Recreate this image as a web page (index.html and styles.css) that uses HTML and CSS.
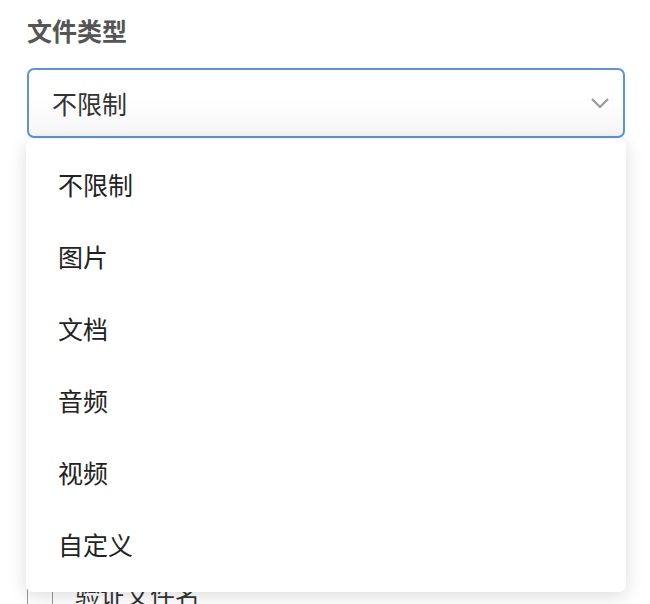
FILE: index.html
```html
<!DOCTYPE html>
<html lang="zh-CN">
<head>
    <meta charset="UTF-8">
    <meta name="viewport" content="width=device-width, initial-scale=1.0">
    <title>文件类型</title>
    <link rel="stylesheet" href="styles.css">
</head>
<body>
    <div class="form">
        <div class="field">
            <label class="field-label">文件类型</label>
            <div class="select-wrap">
                <div class="select open">
                    <span class="select-value">不限制</span>
                    <svg class="select-arrow" width="18" height="10" viewBox="0 0 18 10">
                        <path d="M1 1 L9 9 L17 1" fill="none" stroke="#999" stroke-width="2.2"/>
                    </svg>
                </div>
                <ul class="select-menu">
                    <li>不限制</li>
                    <li>图片</li>
                    <li>文档</li>
                    <li>音频</li>
                    <li>视频</li>
                    <li>自定义</li>
                </ul>
            </div>
        </div>

        <div class="check-row">
            <span class="checkbox"></span>
            <span class="check-text">验证文件名</span>
        </div>
    </div>
</body>
</html>
```

FILE: styles.css
```css
body {
    margin: 0;
    padding: 15px 25px 0 27px;
    background-color: #fff;
    font-family: "Noto Sans CJK SC", "Noto Sans", sans-serif;
    color: #333;
}
.field-label {
    display: block;
    font-size: 25px;
    font-weight: bold;
    line-height: 31px;
    color: #555;
    margin-bottom: 22px;
}
.select-wrap {
    position: relative;
}
.select {
    height: 66px;
    display: flex;
    align-items: center;
    justify-content: space-between;
    padding: 0 14px 0 23px;
    border: 2px solid #5b93e4;
    border-radius: 7px;
    background: linear-gradient(#fff 40%, #f6f6f6);
}
.select-value {
    font-size: 25px;
    color: #333;
    margin-top: -1px;
}
.select-menu {
    position: absolute;
    top: 71px;
    left: -1px;
    right: -1px;
    margin: 0;
    padding: 9px 0 12px;
    list-style: none;
    background-color: #fff;
    border-radius: 7px;
    box-shadow: 0 4px 18px rgba(0, 0, 0, 0.14);
    z-index: 2;
}
.select-menu li {
    height: 72px;
    line-height: 72px;
    padding-left: 32px;
    font-size: 25px;
    color: #222;
}
.check-row {
    display: flex;
    align-items: center;
    gap: 22px;
    margin-top: 438px;
}
.checkbox {
    width: 24px;
    height: 24px;
    border: 1px solid #999;
    border-radius: 2px;
}
.check-text {
    font-size: 25px;
    color: #333;
}
```
